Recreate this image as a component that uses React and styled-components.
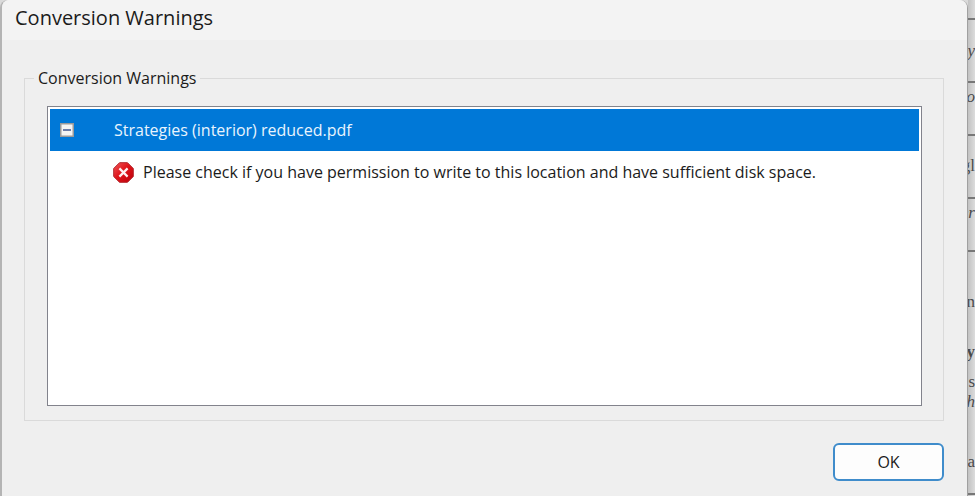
import React, { useState } from "react";
import styled, { createGlobalStyle } from "styled-components";

const GlobalStyle = createGlobalStyle`
  * {
    box-sizing: border-box;
  }

  body {
    margin: 0;
    background: #dadada;
    font-family: "Open Sans", "Noto Sans", sans-serif;
    color: #1b1b1b;
  }
`;

const Screen = styled.div`
  display: flex;
  min-height: 100vh;
`;

const Dialog = styled.main`
  flex: 1;
  min-width: 0;
  display: flex;
  flex-direction: column;
  background: #efefef;
  border-left: 2px solid #b4b4b4;
  border-right: 1px solid #a0a0a0;
  border-radius: 8px 8px 0 0;
`;

const TitleBar = styled.header`
  height: 40px;
  padding: 0 13px;
  display: flex;
  align-items: center;
  background: #f3f3f3;
  border-radius: 8px 8px 0 0;
`;

const Title = styled.h1`
  margin: 0;
  font-size: 20px;
  line-height: 36px;
  font-weight: 400;
  align-self: flex-start;
`;

const Content = styled.div`
  flex: 1;
  display: flex;
  flex-direction: column;
  gap: 22px;
  padding: 28px 23px 15px 22px;
`;

const GroupBox = styled.fieldset`
  flex: 1;
  display: flex;
  flex-direction: column;
  margin: 0;
  padding: 18px 21px 14px 22px;
  border: 1px solid #dadada;
  min-width: 0;
`;

const Legend = styled.legend`
  margin-left: -13px;
  padding: 0 4px;
  font-size: 16px;
  line-height: 20px;
`;

const List = styled.ul`
  flex: 1;
  margin: 0;
  padding: 2px;
  list-style: none;
  background: #ffffff;
  border: 1px solid #82838c;
`;

const FileRow = styled.div`
  height: 42px;
  padding-left: 10px;
  display: flex;
  align-items: center;
  gap: 40px;
  background: #0078d7;
  color: #e9f4fd;
  font-size: 16px;
`;

const Toggle = styled.button`
  width: 14px;
  height: 14px;
  padding: 0;
  display: flex;
  border: none;
  background: none;
`;

const Messages = styled.ul`
  margin: 0;
  padding: 0 0 0 63px;
  list-style: none;
`;

const Message = styled.li`
  height: 42px;
  display: flex;
  align-items: center;
  gap: 9px;
  font-size: 16px;
`;

const Footer = styled.footer`
  display: flex;
  justify-content: flex-end;
`;

const Button = styled.button`
  width: 111px;
  height: 38px;
  border: 2px solid #3f8ccb;
  border-radius: 6px;
  background: #fdfdfd;
  color: #1b1b1b;
  font-family: inherit;
  font-size: 16px;
`;

const Page = styled.aside`
  width: 7px;
  height: 100vh;
  overflow: hidden;
  display: flex;
  flex-direction: column;
  background: linear-gradient(to right, #c2c2c2, #dcdcdc);
  color: #4a4a4a;
  font-family: "Liberation Serif", serif;
  font-size: 17px;
  line-height: 20px;
`;

const Cell = styled.div`
  flex: 0 0 ${(props) => props.$height}px;
  padding-top: ${(props) => props.$top}px;
  border-bottom: 2px solid #777777;
`;

const Line = styled.div`
  display: flex;
  justify-content: flex-end;
  font-style: ${(props) => (props.$italic ? "italic" : "normal")};
  font-weight: ${(props) => (props.$bold ? 700 : 400)};
  margin-bottom: ${(props) => props.$after || 0}px;
  white-space: nowrap;
`;

function ErrorIcon() {
  return (
    <svg width="21" height="21" viewBox="0 0 21 21" aria-hidden="true">
      <defs>
        <linearGradient id="stop" x1="0" y1="0" x2="1" y2="1">
          <stop offset="0" stopColor="#f0585a" />
          <stop offset="0.45" stopColor="#df151b" />
          <stop offset="1" stopColor="#bd0009" />
        </linearGradient>
      </defs>
      <path
        d="M6.5 0.7h8l5.8 5.8v8l-5.8 5.8h-8L0.7 14.5v-8z"
        fill="url(#stop)"
        stroke="#b3262c"
        strokeWidth="1"
      />
      <path
        d="M6.4 6.4l8.2 8.2M14.6 6.4l-8.2 8.2"
        stroke="#fff1f1"
        strokeWidth="2.2"
      />
    </svg>
  );
}

function ToggleIcon({ open }) {
  return (
    <svg width="14" height="14" viewBox="0 0 14 14" aria-hidden="true">
      <rect
        x="0.75"
        y="0.75"
        width="12.5"
        height="12.5"
        fill="#f4f4f4"
        stroke="#9a9a9a"
        strokeWidth="1.5"
      />
      <path d="M3 7h8" stroke="#4a5f97" strokeWidth="1.6" />
      {!open && <path d="M7 3v8" stroke="#4a5f97" strokeWidth="1.6" />}
    </svg>
  );
}

function PageBehind() {
  return (
    <Page aria-hidden="true">
      <Cell $height={20} $top={0} />
      <Cell $height={63} $top={21}>
        <Line $italic>y</Line>
      </Cell>
      <Cell $height={53} $top={4}>
        <Line $italic>o</Line>
      </Cell>
      <Cell $height={63} $top={20}>
        <Line>gl</Line>
      </Cell>
      <Cell $height={53} $top={4}>
        <Line $italic>er</Line>
      </Cell>
      <Cell $height={243} $top={40}>
        <Line $after={30}>n</Line>
        <Line $bold $after={10}>
          ty
        </Line>
        <Line>s</Line>
        <Line $italic $after={40}>
          h
        </Line>
        <Line>a</Line>
      </Cell>
    </Page>
  );
}

function App() {
  const [open, setOpen] = useState(true);

  return (
    <Screen>
      <GlobalStyle />
      <Dialog>
        <TitleBar>
          <Title>Conversion Warnings</Title>
        </TitleBar>
        <Content>
          <GroupBox>
            <Legend>Conversion Warnings</Legend>
            <List>
              <li>
                <FileRow>
                  <Toggle
                    type="button"
                    aria-label="Toggle warnings"
                    aria-expanded={open}
                    onClick={() => setOpen(!open)}
                  >
                    <ToggleIcon open={open} />
                  </Toggle>
                  <span>Strategies (interior) reduced.pdf</span>
                </FileRow>
                {open && (
                  <Messages>
                    <Message>
                      <ErrorIcon />
                      <span>
                        Please check if you have permission to write to this
                        location and have sufficient disk space.
                      </span>
                    </Message>
                  </Messages>
                )}
              </li>
            </List>
          </GroupBox>
          <Footer>
            <Button type="button">OK</Button>
          </Footer>
        </Content>
      </Dialog>
      <PageBehind />
    </Screen>
  );
}

export default App;
